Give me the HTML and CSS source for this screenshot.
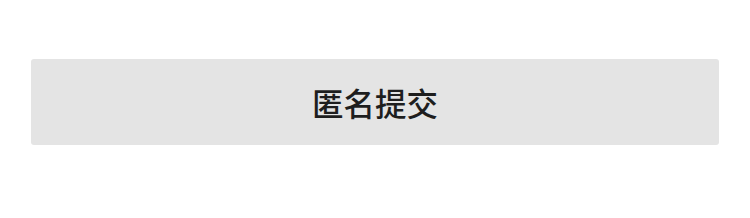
FILE: index.html
```html
<!DOCTYPE html>
<html lang="zh">
<head>
<meta charset="utf-8">
<link rel="stylesheet" href="styles.css">
</head>
<body>
<div class="wrap">
  <button class="submit" type="button">匿名提交</button>
</div>
</body>
</html>
```
FILE: styles.css
```css
html, body {
  margin: 0;
  padding: 0;
  background: #ffffff;
}
.wrap {
  padding: 59px 31px 0 31px;
}
.submit {
  display: flex;
  align-items: center;
  justify-content: center;
  width: 100%;
  height: 86px;
  border: none;
  border-radius: 3px;
  background: #e4e4e4;
  color: #1e1e1e;
  font-family: "Noto Sans CJK SC", "Noto Sans", sans-serif;
  font-size: 31.5px;
  font-weight: 500;
  padding: 0;
  margin: 0;
}
```
